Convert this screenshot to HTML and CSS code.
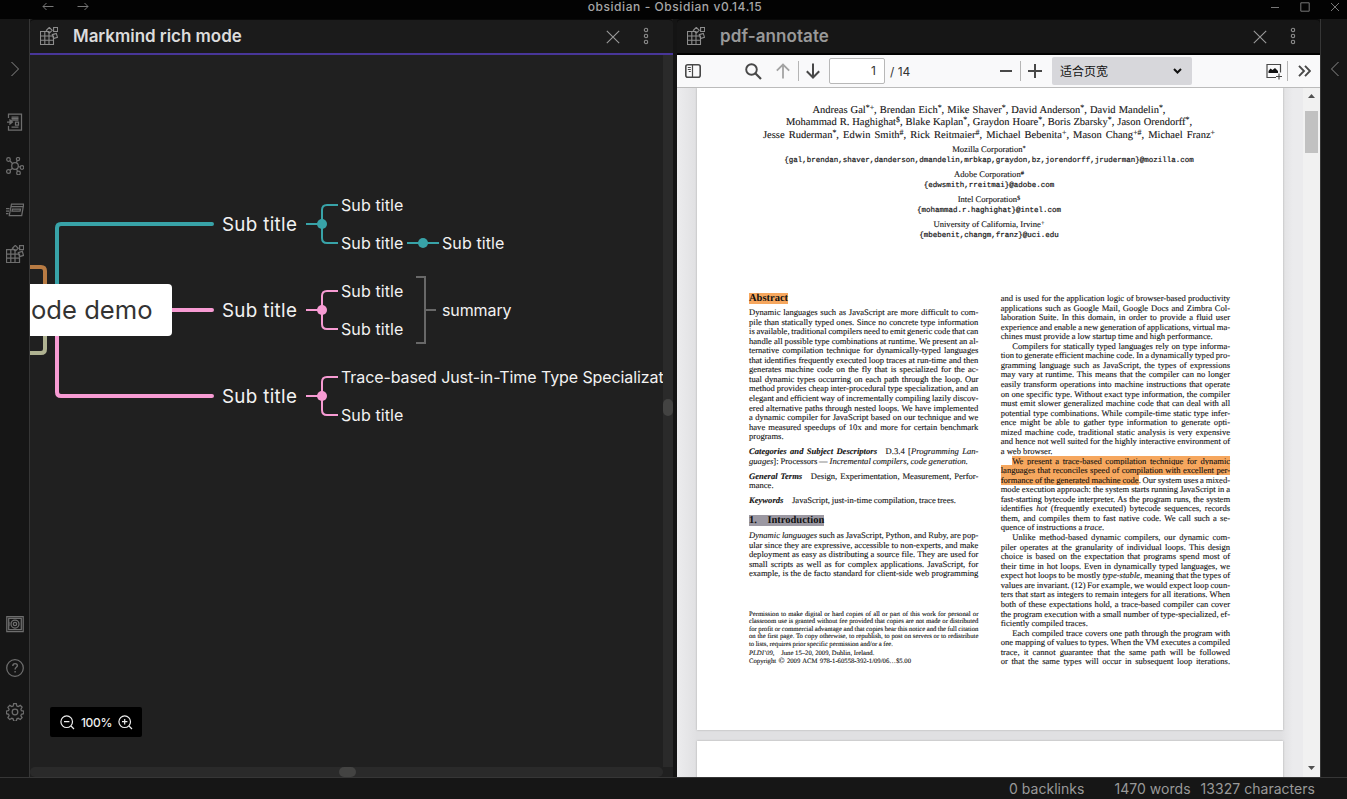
FILE: index.html
```html
<!DOCTYPE html>
<html lang="en">
<head>
<meta charset="utf-8">
<title>obsidian - Obsidian v0.14.15</title>
<link rel="stylesheet" href="styles.css">
</head>
<body>
<svg width="0" height="0" class="defs">
  <symbol id="plugin" viewBox="0 0 18 18"><path d="M.5 4.5H9v4.5h4.5v8.5H.5zM4.8 4.5v13M9 9v8.5M.5 9H9M.5 13.2h13M9.3 .4l2.9 2.9-2.9 2.9-2.9-2.9zM13.6.5h4v4h-4zM12.3 7.6l4-1.2 1.2 4-4 1.2z"/></symbol>
  <symbol id="close" viewBox="0 0 14 14"><path d="M.8.8l12.4 12.4M13.2.8L.8 13.2"/></symbol>
  <symbol id="dots" viewBox="0 0 6 18"><circle cx="3" cy="3" r="1.7"/><circle cx="3" cy="9" r="1.7"/><circle cx="3" cy="15" r="1.7"/></symbol>
</svg>
<div class="app">
  <header class="titlebar">
    <div class="nav">
      <svg width="12" height="10" viewBox="0 0 12 10"><path d="M11.5 4.5H1M4.5 1L1 4.5 4.500 8"/></svg>
      <svg width="12" height="10" viewBox="0 0 12 10"><path d="M.5 4.500H11M7.500 1L11 4.500 7.500 8"/></svg>
    </div>
    <div class="apptitle">obsidian - Obsidian v0.14.15</div>
    <div class="winbtns">
      <svg width="10" height="10" viewBox="0 0 10 10"><path d="M1 5.500h8"/></svg>
      <svg width="10" height="10" viewBox="0 0 10 10"><path d="M.8.8h8.400v8.400H.8z"/></svg>
      <svg width="10" height="10" viewBox="0 0 10 10"><path d="M1 1l8 8M9 1L1 9"/></svg>
    </div>
  </header>
  <div class="workspace">
    <nav class="ribbon">
      <svg class="expand" width="10" height="16" viewBox="0 0 10 16"><path d="M1.500 1l7 7-7 7"/></svg>
      <div class="actions">
        <svg width="18" height="18" viewBox="0 0 18 18"><path d="M2.500 5V1h13v16h-13v-4M5.500 4h7M5.500 5.500h7M5.500 7h7M12.500 9v3h-3V9zM5.500 14h7M1 9h5M4 7l2.500 2L4 11z"/></svg>
        <svg width="18" height="18" viewBox="0 0 18 18"><circle cx="9" cy="9" r="3.300"/><circle cx="2.500" cy="2.500" r="1.800"/><circle cx="12" cy="2" r="1.600"/><circle cx="16" cy="10.500" r="1.800"/><circle cx="2.500" cy="14.500" r="1.900"/><circle cx="12.500" cy="16" r="1.800"/><path d="M3.800 3.800l2.900 2.900M11.300 3.600l-1 2.200M12.300 9.500l2 .500M6.600 11.300l-2.700 2M10.400 12l1.200 2.300"/></svg>
        <svg width="18" height="18" viewBox="0 0 18 18"><path d="M5.500 3h12.200l-2 11.500H3.300zM5 5.500h12M6.500 8h8l-.400 2H6zM0 7.500h3.500M0 10h3M0 12.500h2.500"/></svg>
        <svg width="18" height="18"><use href="#plugin"/></svg>
      </div>
      <div class="settings">
        <svg width="18" height="18" viewBox="0 0 18 18"><path d="M.8 1.500h16.400v15H.8zM2.700 3.300h12.600v11.400H2.700zM3 7v4"/><circle cx="9" cy="9" r="4"/><circle cx="9" cy="9" r="1.700"/></svg>
        <svg width="18" height="18" viewBox="0 0 18 18"><circle cx="9" cy="9" r="8.300"/><path d="M6.800 7c0-3.300 4.600-3 4.600-.400 0 1.800-2.300 1.700-2.300 3.900M9.100 12v1.600" stroke-width="1.400"/></svg>
        <svg width="18" height="18" viewBox="0 0 18 18"><circle cx="9" cy="9" r="2.800"/><path d="M7.700.7h2.600l.6 2.400 1.300.5 2.100-1.200 1.800 1.800-1.200 2.100.5 1.300 2.300.5v2.600l-2.300.6-.5 1.300 1.200 2-1.900 1.900-2-1.200-1.300.5-.6 2.200H7.700l-.6-2.200-1.300-.5-2 1.200-1.900-1.900 1.200-2-.5-1.300-2.200-.6V8.100l2.200-.6.500-1.200-1.200-2 1.900-1.900 2 1.200 1.300-.5z"/></svg>
      </div>
    </nav>

    <section class="pane mind">
      <div class="tabhead">
        <svg class="ico" width="18" height="18"><use href="#plugin"/></svg>
        <span class="name">Markmind rich mode</span>
        <svg class="ico x" width="14" height="14"><use href="#close"/></svg>
        <svg class="ico" width="6" height="18"><use href="#dots"/></svg>
      </div>
      <div class="canvas">
        <svg class="links" width="633" height="712" viewBox="30 55 633 712">
          <g stroke-width="4" stroke-linecap="round">
            <path class="teal" d="M57 290V228q0-4 4-4H212"/>
            <path class="pink" d="M57 330V392q0 4 4 4H212M168 310H212"/>
            <path class="orange" d="M26 267H41q4 0 4 4V290"/>
            <path class="olive" d="M26 353H41q4 0 4-4V330"/>
          </g>
          <g stroke-width="2">
            <path class="teal" d="M306 224H322M338 205H327q-5 0-5 5V238q0 5 5 5H338M407 243H439"/>
            <path class="pink" d="M306 310H322M338 291H327q-5 0-5 5V324q0 5 5 5H338M306 396H322M338 377H327q-5 0-5 5V410q0 5 5 5H338"/>
            <path class="grey" d="M416 277H425V343H416M425 310H436"/>
          </g>
          <g class="tealdot"><circle cx="322" cy="224" r="5"/><circle cx="423" cy="243" r="5"/></g>
          <g class="pinkdot"><circle cx="322" cy="310" r="5"/><circle cx="322" cy="396" r="5"/></g>
        </svg>
        <div class="node root">ode demo</div>
        <div class="node main n1">Sub title</div>
        <div class="node main n2">Sub title</div>
        <div class="node main n3">Sub title</div>
        <div class="node leaf l1">Sub title</div>
        <div class="node leaf l2">Sub title</div>
        <div class="node leaf l3">Sub title</div>
        <div class="node leaf l4">Sub title</div>
        <div class="node leaf l5">Sub title</div>
        <div class="node leaf l6">summary</div>
        <div class="node leaf l7">Trace-based Just-in-Time Type Specializat</div>
        <div class="node leaf l8">Sub title</div>
        <div class="zoom">
          <svg width="15" height="15" viewBox="0 0 15 15"><circle cx="6.700" cy="6.700" r="5.800"/><path d="M11 11l3 3M4 6.700h5.400"/></svg>
          <span>100%</span>
          <svg width="15" height="15" viewBox="0 0 15 15"><circle cx="6.700" cy="6.700" r="5.800"/><path d="M11 11l3 3M4 6.700h5.400M6.700 4v5.400"/></svg>
        </div>
      </div>
      <div class="vbar"><i></i></div>
      <div class="hbar"><i></i></div>
    </section>

    <section class="pane pdf">
      <div class="tabhead">
        <svg class="ico" width="18" height="18"><use href="#plugin"/></svg>
        <span class="name">pdf-annotate</span>
        <svg class="ico x" width="14" height="14"><use href="#close"/></svg>
        <svg class="ico" width="6" height="18"><use href="#dots"/></svg>
      </div>
      <div class="toolbar">
        <svg class="t-side" width="16" height="14" viewBox="0 0 16 14"><rect x=".8" y=".8" width="14.400" height="12.400" rx="2" stroke-width="1.600"/><path d="M7.500 1v12" stroke-width="1.200"/><path d="M2.800 3.500h3M2.800 5.500h3M3.800 7.500h2" stroke-width="1"/></svg>
        <svg class="t-find" width="17" height="17" viewBox="0 0 17 17"><circle cx="6.500" cy="6.500" r="5.300" stroke-width="1.900"/><path d="M10.300 10.300l5.700 5.700" stroke-width="2.200"/></svg>
        <svg class="t-up" width="14" height="16" viewBox="0 0 14 16"><path d="M7 15.500V1.500M.8 7.700L7 1.500l6.200 6.200" stroke-width="1.800"/></svg>
        <i class="sep"></i>
        <svg class="t-down" width="14" height="16" viewBox="0 0 14 16"><path d="M7 .5v14M.8 8.300L7 14.500l6.200-6.200" stroke-width="2"/></svg>
        <div class="pageno">1</div>
        <span class="pages">/ 14</span>
        <svg class="t-minus" width="12" height="14" viewBox="0 0 12 14"><path d="M0 7h12" stroke-width="2"/></svg>
        <i class="sep s2"></i>
        <svg class="t-plus" width="14" height="14" viewBox="0 0 14 14"><path d="M0 7h14M7 0v14" stroke-width="2"/></svg>
        <div class="scale"><span>适合页宽</span><svg width="9" height="6" viewBox="0 0 9 6"><path d="M1 1l3.500 3.500L8 1" stroke-width="2"/></svg></div>
        <svg class="t-img" width="17" height="17" viewBox="0 0 17 17"><path d="M10 14.500H1V1.500h13.500v8" stroke-width="1.200"/><path d="M13 10.500v6M10 13.500h6" stroke-width="1.200"/><path d="M2.500 10v-2l2-2.500 2 1.500 2.500-2 3 3v2z" fill="#111" stroke="none"/></svg>
        <i class="sep s3"></i>
        <svg class="t-more" width="13" height="12" viewBox="0 0 13 12"><path d="M1 .8L6 6l-5 5.200M7 .8L12 6l-5 5.200" stroke-width="1.900"/></svg>
      </div>
      <div class="viewer">
        <div class="pagesview">
          <article class="page">
            <div class="authors">
              <p class="a1">Andreas Gal<sup>*+</sup>, Brendan Eich<sup>*</sup>, Mike Shaver<sup>*</sup>, David Anderson<sup>*</sup>, David Mandelin<sup>*</sup>,</p>
              <p class="a2">Mohammad R. Haghighat<sup>$</sup>, Blake Kaplan<sup>*</sup>, Graydon Hoare<sup>*</sup>, Boris Zbarsky<sup>*</sup>, Jason Orendorff<sup>*</sup>,</p>
              <p class="a3">Jesse Ruderman<sup>*</sup>, Edwin Smith<sup>#</sup>, Rick Reitmaier<sup>#</sup>, Michael Bebenita<sup>+</sup>, Mason Chang<sup>+#</sup>, Michael Franz<sup>+</sup></p>
            </div>
            <div class="affil"><p>Mozilla Corporation<sup>*</sup></p><code>{gal,brendan,shaver,danderson,dmandelin,mrbkap,graydon,bz,jorendorff,jruderman}@mozilla.com</code></div>
            <div class="affil"><p>Adobe Corporation<sup>#</sup></p><code>{edwsmith,rreitmai}@adobe.com</code></div>
            <div class="affil"><p>Intel Corporation<sup>$</sup></p><code>{mohammad.r.haghighat}@intel.com</code></div>
            <div class="affil"><p>University of California, Irvine<sup>+</sup></p><code>{mbebenit,changm,franz}@uci.edu</code></div>
            <div class="cols">
              <div class="col">
                <h3><mark>Abstract</mark></h3>
                <p>Dynamic languages such as JavaScript are more difficult to com-</p>
                <p>pile than statically typed ones. Since no concrete type information</p>
                <p>is available, traditional compilers need to emit generic code that can</p>
                <p>handle all possible type combinations at runtime. We present an al-</p>
                <p>ternative compilation technique for dynamically-typed languages</p>
                <p>that identifies frequently executed loop traces at run-time and then</p>
                <p>generates machine code on the fly that is specialized for the ac-</p>
                <p>tual dynamic types occurring on each path through the loop. Our</p>
                <p>method provides cheap inter-procedural type specialization, and an</p>
                <p>elegant and efficient way of incrementally compiling lazily discov-</p>
                <p>ered alternative paths through nested loops. We have implemented</p>
                <p>a dynamic compiler for JavaScript based on our technique and we</p>
                <p>have measured speedups of 10x and more for certain benchmark</p>
                <p class="end">programs.</p>
                <p class="gap"><b>Categories and Subject Descriptors</b>&emsp;D.3.4 [<em>Programming Lan-</em></p>
                <p class="end w219"><em>guages</em>]: Processors — <em>Incremental compilers, code generation.</em></p>
                <p class="gap"><b>General Terms</b>&emsp;Design, Experimentation, Measurement, Perfor-</p>
                <p class="end">mance.</p>
                <p class="gap end w207"><b>Keywords</b>&emsp;JavaScript, just-in-time compilation, trace trees.</p>
                <h3 class="intro"><mark class="grey-mark">1.&emsp;Introduction</mark></h3>
                <p><em>Dynamic languages</em> such as JavaScript, Python, and Ruby, are pop-</p>
                <p>ular since they are expressive, accessible to non-experts, and make</p>
                <p>deployment as easy as distributing a source file. They are used for</p>
                <p>small scripts as well as for complex applications. JavaScript, for</p>
                <p>example, is the de facto standard for client-side web programming</p>
                <div class="permission">
                  <p>Permission to make digital or hard copies of all or part of this work for personal or</p>
                  <p>classroom use is granted without fee provided that copies are not made or distributed</p>
                  <p>for profit or commercial advantage and that copies bear this notice and the full citation</p>
                  <p>on the first page. To copy otherwise, to republish, to post on servers or to redistribute</p>
                  <p class="end w144">to lists, requires prior specific permission and/or a fee.</p>
                  <p class="end venue"><em>PLDI’09,</em>&emsp;June 15–20, 2009, Dublin, Ireland.</p>
                  <p class="end w162">Copyright <span class="copy">©</span> 2009 ACM 978-1-60558-392-1/09/06…$5.00</p>
                </div>
              </div>
              <div class="col">
                <p>and is used for the application logic of browser-based productivity</p>
                <p>applications such as Google Mail, Google Docs and Zimbra Col-</p>
                <p>laboration Suite. In this domain, in order to provide a fluid user</p>
                <p>experience and enable a new generation of applications, virtual ma-</p>
                <p class="end w212">chines must provide a low startup time and high performance.</p>
                <p class="ind">Compilers for statically typed languages rely on type informa-</p>
                <p>tion to generate efficient machine code. In a dynamically typed pro-</p>
                <p>gramming language such as JavaScript, the types of expressions</p>
                <p>may vary at runtime. This means that the compiler can no longer</p>
                <p>easily transform operations into machine instructions that operate</p>
                <p>on one specific type. Without exact type information, the compiler</p>
                <p>must emit slower generalized machine code that can deal with all</p>
                <p>potential type combinations. While compile-time static type infer-</p>
                <p>ence might be able to gather type information to generate opti-</p>
                <p>mized machine code, traditional static analysis is very expensive</p>
                <p>and hence not well suited for the highly interactive environment of</p>
                <p class="end">a web browser.</p>
                <p class="ind"><mark>We present a trace-based compilation technique for dynamic</mark></p>
                <p><mark>languages that reconciles speed of compilation with excellent per-</mark></p>
                <p><mark>formance of the generated machine code</mark>. Our system uses a mixed-</p>
                <p>mode execution approach: the system starts running JavaScript in a</p>
                <p>fast-starting bytecode interpreter. As the program runs, the system</p>
                <p>identifies <em>hot</em> (frequently executed) bytecode sequences, records</p>
                <p>them, and compiles them to fast native code. We call such a se-</p>
                <p class="end w104">quence of instructions a <em>trace</em>.</p>
                <p class="ind">Unlike method-based dynamic compilers, our dynamic com-</p>
                <p>piler operates at the granularity of individual loops. This design</p>
                <p>choice is based on the expectation that programs spend most of</p>
                <p>their time in hot loops. Even in dynamically typed languages, we</p>
                <p>expect hot loops to be mostly <em>type-stable</em>, meaning that the types of</p>
                <p>values are invariant. (12) For example, we would expect loop coun-</p>
                <p>ters that start as integers to remain integers for all iterations. When</p>
                <p>both of these expectations hold, a trace-based compiler can cover</p>
                <p>the program execution with a small number of type-specialized, ef-</p>
                <p class="end">ficiently compiled traces.</p>
                <p class="ind">Each compiled trace covers one path through the program with</p>
                <p>one mapping of values to types. When the VM executes a compiled</p>
                <p>trace, it cannot guarantee that the same path will be followed</p>
                <p>or that the same types will occur in subsequent loop iterations.</p>
              </div>
            </div>
          </article>
          <article class="page next"></article>
        </div>
        <div class="scrollbar">
          <svg width="7" height="4" viewBox="0 0 7 4"><path d="M0 4L3.500 0 7 4z"/></svg>
          <i></i>
          <svg width="7" height="4" viewBox="0 0 7 4"><path d="M0 0L3.500 4 7 0z"/></svg>
        </div>
      </div>
    </section>
    <nav class="ribbon right">
      <svg class="expand" width="10" height="16" viewBox="0 0 10 16"><path d="M8.500 1l-7 7 7 7"/></svg>
    </nav>
  </div>
  <footer class="status"><span>0 backlinks</span><span class="words">1470 words</span><span class="chars">13327 characters</span></footer>
</div>
</body>
</html>
```

FILE: styles.css
```css
* { box-sizing: border-box; }
body { margin: 0; font-family: Inter, "Noto Sans CJK SC", sans-serif; background: #161616; overflow: hidden; }
p, h3 { margin: 0; }
svg { display: block; fill: none; flex: none; }
.defs { position: absolute; }
.app { display: flex; flex-direction: column; width: 1347px; height: 799px; }

/* window title bar */
.titlebar { display: grid; grid-template-columns: 1fr auto 1fr; height: 19px; background: #030303; }
.nav { display: flex; gap: 23px; padding: 2px 0 0 42px; }
.titlebar svg { stroke: #777; stroke-width: 1; }
.apptitle { padding-left: 3px; font-size: 12px; line-height: 14px; font-weight: 500; color: #a6a6a6; letter-spacing: .57px; }
.winbtns { display: flex; justify-content: flex-end; gap: 20px; padding: 2px 7px 0 0; }

.workspace { display: flex; flex: none; height: 758px; background: #141414; }

/* ribbons */
.ribbon { width: 30px; flex: none; background: #161616; border-right: 1px solid #363636; display: flex; flex-direction: column; align-items: center; }
.ribbon svg { stroke: #6e6e6e; stroke-width: 1.25; }
.ribbon .expand { margin-top: 42px; stroke: #8a8a8a; stroke-width: 1; }
.actions { display: flex; flex-direction: column; gap: 26px; margin-top: 36px; }
.settings { display: flex; flex-direction: column; gap: 26px; margin-top: auto; margin-bottom: 56px; }
.ribbon.right { width: 27px; border-right: 0; border-left: 1px solid #363636; }
.right .expand { margin-left: 2px; }

/* panes */
.pane { width: 643px; flex: none; display: grid; }
.tabhead { display: flex; align-items: center; height: 36px; padding: 0 24px 2px 10px; background: #1b1b1b; border-top: 1px solid #090909; border-bottom: 2px solid #483699; border-radius: 4px 4px 0 0; }
.tabhead .ico { stroke: #8d8d8d; stroke-width: 1.1; }
.tabhead .name { flex: 1; margin-left: 15px; font-size: 17px; font-weight: 600; line-height: 22px; color: #dcdcdc; letter-spacing: -.04px; }
.tabhead .x { margin-right: 23px; margin-top: 2px; stroke: #9a9a9a; }
.mind { grid-template: 36px 712px 10px / 633px 10px; background: #202020; }
.mind .tabhead { grid-column: 1 / 3; }
.pdf { margin-left: 4px; grid-template: 36px 33px 689px / 643px; }
.pdf .tabhead { background: #161616; border-bottom-color: #000; }
.pdf .name { color: #999; letter-spacing: .08px; }

/* mind map */
.canvas { position: relative; overflow: hidden; }
.links .teal { stroke: #38a3a8; }
.links .pink { stroke: #f79bd3; }
.links .orange { stroke: #b87b43; }
.links .olive { stroke: #afb291; }
.links .grey { stroke: #686868; }
.tealdot { fill: #38a3a8; }
.pinkdot { fill: #f79bd3; }
.node { position: absolute; white-space: nowrap; color: #f2f2f2; }
.root { left: 0; top: 229px; width: 142px; height: 52px; padding-left: 1px; border-radius: 0 4px 4px 0; background: #fff; color: #333; font-size: 25.600px; line-height: 52px; }
.main { left: 192px; font-size: 18.800px; line-height: 24px; letter-spacing: .32px; }
.n1 { top: 158px; }
.n2 { top: 244px; }
.n3 { top: 330px; }
.leaf { left: 311px; font-size: 16px; line-height: 20px; letter-spacing: .09px; }
.l1 { top: 140px; }
.l2 { top: 178px; }
.l3 { top: 178px; left: 412px; }
.l4 { top: 226px; }
.l5 { top: 264px; }
.l6 { top: 245px; left: 412px; letter-spacing: -.1px; }
.l7 { top: 312px; letter-spacing: -.09px; }
.l8 { top: 350px; }
.zoom { position: absolute; left: 20px; top: 652px; width: 92px; height: 30px; border-radius: 2px; background: #000; color: #eee; display: flex; align-items: center; justify-content: space-between; padding: 0 9px 0 10px; font-size: 12px; font-weight: 500; }
.zoom svg { stroke: #eee; stroke-width: 1.2; }
.zoom span { letter-spacing: -.3px; }
.vbar { background: #2a2a2a; padding-top: 344px; }
.vbar i { display: block; width: 10px; height: 17px; border-radius: 5px; background: #434342; }
.hbar { background: #2a2a2a; padding-left: 309px; border-radius: 5px; }
.hbar i { display: block; width: 17px; height: 10px; border-radius: 5px; background: #434342; }

/* pdf toolbar */
.toolbar { display: flex; align-items: center; background: #f9f9fa; border-bottom: 1px solid #bbb; padding-left: 8px; }
.toolbar svg { stroke: #484848; }
.t-find { margin-left: 44px; }
.toolbar .t-up { margin-left: 14px; stroke: #a3a3a3; }
.sep { width: 1px; height: 20px; background: #b5b5b5; margin: 0 7px 0 8px; }
.pageno { margin-left: 9px; width: 56px; height: 26px; border: 1px solid #b8b8b8; border-radius: 2px; background: #fff; font-size: 12px; line-height: 24px; text-align: right; padding-right: 8px; color: #333; }
.pages { font-size: 12px; color: #333; margin-left: 5px; width: 110px; flex: none; margin-right: -24px; }
.toolbar .t-minus { margin-left: 24px; }
.scale { margin-left: 10px; width: 140px; height: 28px; border-radius: 2px; background: #d7d7db; display: flex; align-items: center; justify-content: space-between; padding: 0 10px 2px 8px; font: 12px "Noto Sans CJK SC", sans-serif; color: #111; }
.scale svg { stroke: #111; margin-top: 2px; }
.t-img { margin-left: 74px; }
.toolbar .s3 { margin: 0 10px 0 4px; }

/* pdf pages */
.viewer { display: flex; overflow: hidden; background: #e4e4e6; }
.pagesview { width: 626px; padding-left: 20px; overflow: hidden; background: linear-gradient(90deg, #ececee, #e0e0e2 20px, #e0e0e2 604px, #ebebed 616px); }
.page { width: 586px; height: 642px; padding-top: 16.800px; background: #fff; box-shadow: 0 0 2px #aaa; font-family: "Liberation Serif", "Times New Roman", serif; color: #111; text-rendering: geometricPrecision; }
.next { margin-top: 11px; height: 60px; }
.page p { white-space: nowrap; text-align-last: justify; -webkit-text-stroke: .1px #111; }
.page sup { font-size: 75%; line-height: 0; vertical-align: .38em; }
.authors { font-size: 10.500px; line-height: 12.600px; word-spacing: -1px; padding-right: 2px; }
.authors p { margin: 0 auto; }
.a1 { width: 353px; }
.a2 { width: 406px; }
.a3 { width: 452px; }
.affil { height: 21px; margin-bottom: 4px; text-align: center; padding-right: 2px; }
.authors + .affil { margin-top: 1.400px; }
.page .affil p { font-size: 8.600px; line-height: 11px; text-align-last: center; }
.affil code { display: block; font: 7.510px/12px "Liberation Mono", monospace; -webkit-text-stroke: .2px #1c1c1c; }
.cols { display: grid; grid-template-columns: 229.400px 229.400px; gap: 22.300px; padding-left: 52px; margin-top: 54px; }
.col { font-size: 8.600px; line-height: 9.560px; word-spacing: -.9px; }
.col h3 { font-size: 10.500px; line-height: 10px; margin-bottom: 4px; word-spacing: 0; }
.page mark { background: #f6a75e; color: inherit; }
.page .grey-mark { background: #9b98a2; }
.col b { font-style: italic; }
.page .end { text-align-last: left; word-spacing: 0; }
.page .w219, .page .w207, .page .w212, .page .w144, .page .w162, .page .w104 { text-align-last: justify; word-spacing: -.9px; }
.w219 { width: 219px; }
.w207 { width: 207px; }
.w212 { width: 212px; }
.w144 { width: 144px; }
.w162 { width: 162px; }
.w104 { width: 103.500px; }
.gap { margin-top: 5.300px; }
.ind { padding-left: 11.500px; }
.col .intro { margin: 10.400px 0 5px; }
.permission { margin-top: 31.800px; font-size: 6.700px; line-height: 7.600px; }
.permission .venue { margin-top: 1.800px; }
.copy { font-size: 8px; line-height: 0; }

.scrollbar { width: 17px; background: #f1f1f1; display: flex; flex-direction: column; align-items: center; padding: 6px 0 7px; }
.scrollbar svg { fill: #505050; }
.scrollbar i { width: 13px; height: 42px; margin: 13px 0 auto; background: #c1c1c1; }

/* status bar */
.status { display: flex; justify-content: flex-end; height: 22px; border-top: 1px solid #363636; padding-right: 32px; font-size: 14px; line-height: 22px; letter-spacing: .03px; color: #999; background: #161616; }
.words { margin-left: 30px; }
.chars { margin-left: 10px; }
```
